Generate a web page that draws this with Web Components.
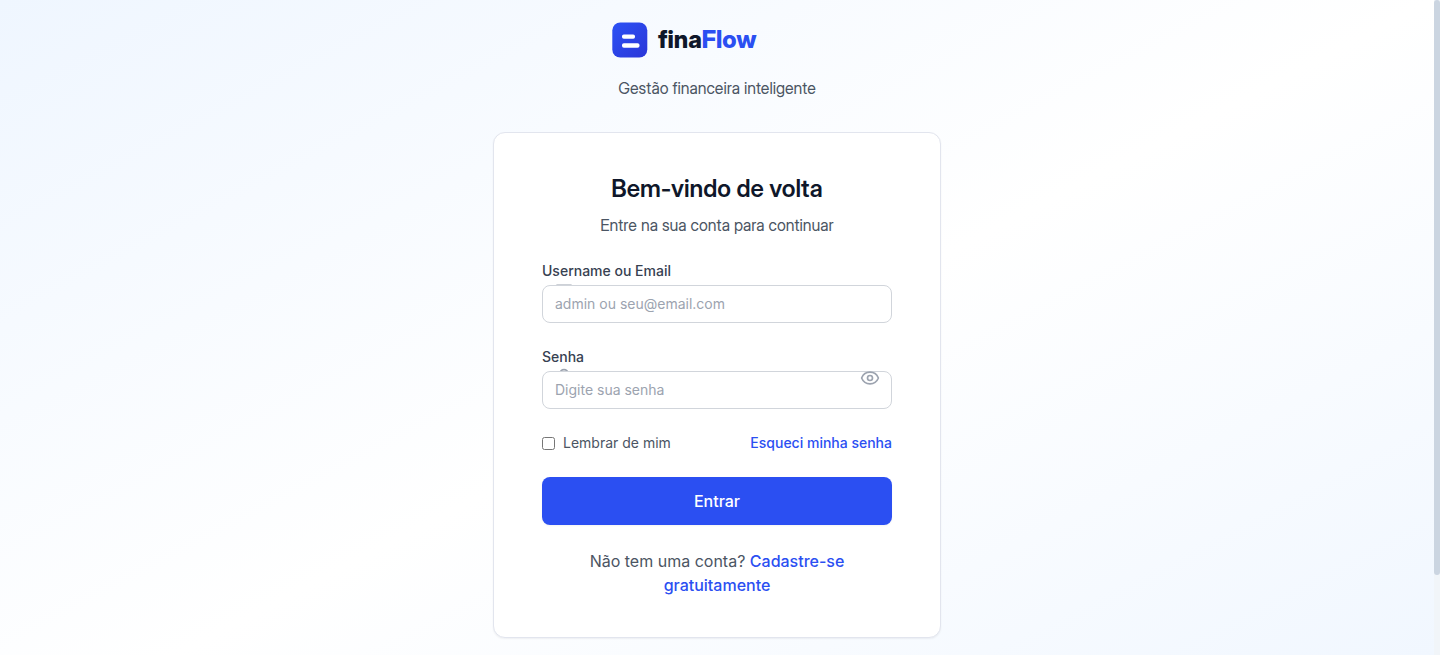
<!DOCTYPE html>
<html lang="pt-BR">
<head>
<meta charset="utf-8">
<meta name="viewport" content="width=device-width, initial-scale=1">
<title>finaFlow</title>
<style>
body{margin:0;--display:"Inter Display",Inter,"Liberation Sans",sans-serif;font-family:Inter,"Liberation Sans",sans-serif;font-size:16px;line-height:24px;color:#4b5563;background:#fff}
</style>
</head>
<body>
<scroll-view><login-page></login-page></scroll-view>
<script>
const define = (name, html, setup) => {
  const template = document.createElement('template');
  template.innerHTML = html;
  customElements.define(name, class extends HTMLElement {
    constructor() {
      super();
      this.attachShadow({ mode: 'open' }).append(template.content.cloneNode(true));
      if (setup) setup(this, this.shadowRoot);
    }
  });
};

define('brand-logo', `
<style>
:host{display:flex;align-items:center;gap:8px;width:214px}
svg{display:block;width:40px;height:40px}
.name{font-family:var(--display);font-size:24px;line-height:32px;font-weight:800;color:#0f172a}
.name b{font-weight:800;color:#2b4ff2}
</style>
<svg viewBox="0 0 40 40" aria-hidden="true">
  <defs><linearGradient id="g" x1="0" y1="0" x2="1" y2="1"><stop stop-color="#2c51f5"/><stop offset="1" stop-color="#2b36d8"/></linearGradient></defs>
  <rect x="2.300" y="2.500" width="35" height="35" rx="8" fill="url(#g)"/>
  <rect x="12" y="14.400" width="13" height="4.400" rx="1.800" fill="#fff"/>
  <rect x="12" y="23.200" width="17.500" height="4.500" rx="1.900" fill="#fff"/>
</svg>
<span class="name">fina<b>Flow</b></span>`);

define('text-field', `
<style>
:host{display:block}
label{display:block;font-size:14px;line-height:20px;font-weight:500;color:#374151;margin-bottom:4px}
.box{position:relative}
input{display:block;box-sizing:border-box;width:100%;height:38px;padding:7px 12px 9px;border:1px solid #d1d5db;border-radius:8px;background:#fff;font:inherit;font-size:14px;line-height:20px;color:#111827;position:relative}
input::placeholder{color:#9ca3af;opacity:1}
.lead{position:absolute;left:12px;top:-3px}
.trail{position:absolute;right:12px;top:-3px}
.lead,.trail{display:flex;color:#9ca3af}
</style>
<label for="field"></label>
<div class="box">
  <span class="lead"><slot name="icon"></slot></span>
  <input id="field">
  <span class="trail"><slot name="action"></slot></span>
</div>`, (host, root) => {
  root.querySelector('label').textContent = host.getAttribute('label');
  const input = root.querySelector('input');
  input.type = host.getAttribute('type');
  input.placeholder = host.getAttribute('placeholder');
});

define('login-card', `
<style>
:host{display:block;box-sizing:border-box;width:100%;padding:40px 48px;background:#fff;border:1px solid #e2e5ee;border-radius:12px;box-shadow:0 1px 2px rgba(15,23,42,.06)}
h1{margin:0 0 8px;font-family:var(--display);font-size:24px;line-height:32px;font-weight:600;color:#0f172a;text-align:center}
p{margin:0;text-align:center}
.lede{font-family:var(--display)}
form{display:grid;gap:24px;margin-top:24px}
svg{display:block;width:20px;height:20px;fill:none;stroke:currentColor;stroke-width:2;stroke-linecap:round;stroke-linejoin:round}
.eye{display:block;padding:0;border:0;background:none;color:inherit;cursor:pointer}
.row{display:flex;justify-content:space-between;align-items:center;font-size:14px;line-height:20px}
.remember{display:flex;align-items:center;gap:8px}
.remember input{margin:0;width:13px;height:13px}
a{color:#2b4ff2;font-weight:500;text-decoration:none}
.submit{height:48px;border:0;border-radius:8px;background:#2b4ff2;color:#fff;font:inherit;font-weight:500;box-shadow:0 1px 2px rgba(0,0,0,.05);cursor:pointer}
.signup{margin-top:24px}
</style>
<h1>Bem-vindo de volta</h1>
<p class="lede">Entre na sua conta para continuar</p>
<form>
  <text-field label="Username ou Email" type="text" placeholder="admin ou seu@email.com">
    <svg slot="icon" viewBox="0 0 24 24" aria-hidden="true"><rect x="2" y="4" width="20" height="16" rx="2"/><path d="m22 7-8.970 5.700a1.940 1.940 0 0 1-2.060 0L2 7"/></svg>
  </text-field>
  <text-field label="Senha" type="password" placeholder="Digite sua senha">
    <svg slot="icon" viewBox="0 0 24 24" aria-hidden="true"><rect x="3" y="11" width="18" height="11" rx="2"/><path d="M7 11V7a5 5 0 0 1 10 0v4"/></svg>
    <button slot="action" class="eye" type="button" aria-label="Mostrar senha"><svg viewBox="0 0 24 24" aria-hidden="true"><path d="M2.062 12.348a1 1 0 0 1 0-.696 10.750 10.750 0 0 1 19.876 0 1 1 0 0 1 0 .696 10.750 10.750 0 0 1-19.876 0"/><circle cx="12" cy="12" r="3"/></svg></button>
  </text-field>
  <div class="row">
    <label class="remember"><input type="checkbox">Lembrar de mim</label>
    <a href="#senha">Esqueci minha senha</a>
  </div>
  <button class="submit" type="submit">Entrar</button>
</form>
<p class="signup">Não tem uma conta? <a href="#cadastro"><span>Cadastre-se</span> <span>gratuitamente</span></a></p>`);

define('login-page', `
<style>
:host{display:block;box-sizing:border-box;min-height:100vh;padding:20px 16px 108px;background:linear-gradient(to bottom right,#eff6ff,#fff,#eff6ff)}
main{max-width:448px;margin:0 auto}
header{display:flex;flex-direction:column;align-items:center;margin-bottom:32px}
.tag{margin:16px 0 0;font-family:var(--display)}
</style>
<main>
  <header><brand-logo></brand-logo><p class="tag">Gestão financeira inteligente</p></header>
  <login-card></login-card>
</main>`);

define('scroll-view', `
<style>
:host{display:flex;height:100vh;overflow:hidden}
.view{flex:1;min-width:0;overflow-y:auto;scrollbar-width:none}
.rail{flex:none;width:6px;background:#f1f5f9}
.thumb{border-radius:3px;background:#cbd5e1}
</style>
<div class="view"><slot></slot></div>
<div class="rail"><div class="thumb"></div></div>`, (host, root) => {
  const view = root.querySelector('.view');
  const thumb = root.querySelector('.thumb');
  const update = () => {
    const ratio = view.clientHeight / view.scrollHeight;
    thumb.style.height = ratio * 100 + '%';
    thumb.style.transform = `translateY(${view.scrollTop * ratio}px)`;
  };
  view.addEventListener('scroll', update);
  new ResizeObserver(update).observe(view);
});
</script>
</body>
</html>
